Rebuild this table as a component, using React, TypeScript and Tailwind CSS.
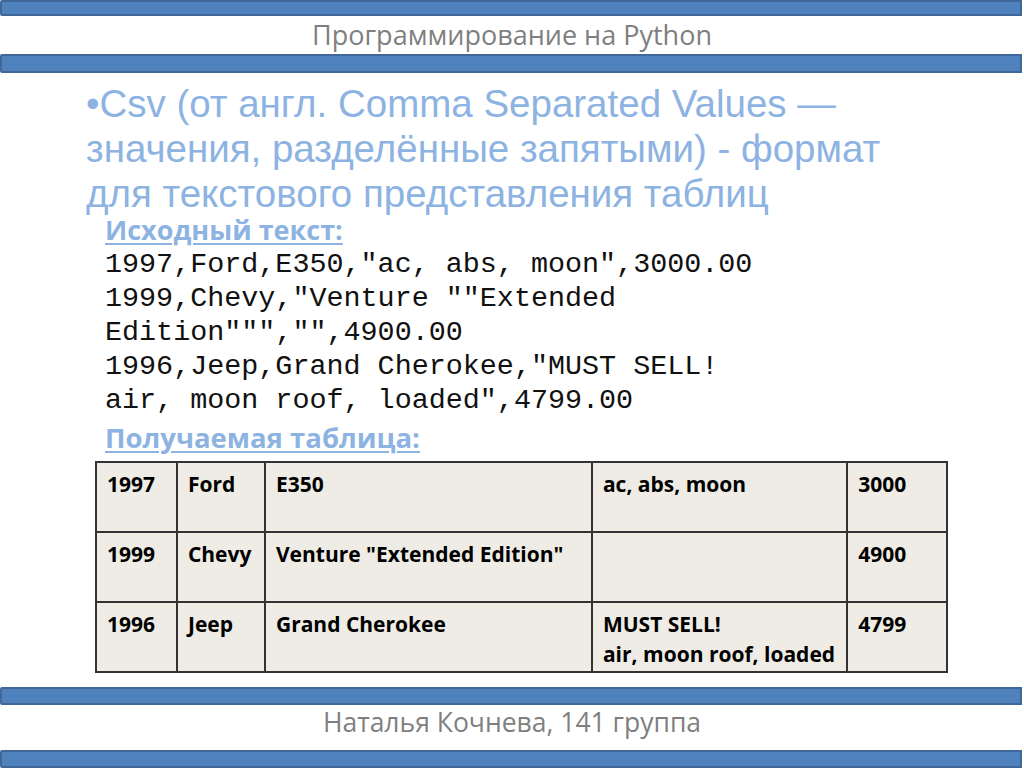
const rows = [
  { year: "1997", make: "Ford", model: "E350", desc: ["ac, abs, moon"], price: "3000" },
  { year: "1999", make: "Chevy", model: 'Venture "Extended Edition"', desc: [], price: "4900" },
  { year: "1996", make: "Jeep", model: "Grand Cherokee", desc: ["MUST SELL!", "air, moon roof, loaded"], price: "4799" },
];

const source = [
  '1997,Ford,E350,"ac, abs, moon",3000.00',
  '1999,Chevy,"Venture ""Extended',
  'Edition""","",4900.00',
  '1996,Jeep,Grand Cherokee,"MUST SELL!',
  'air, moon roof, loaded",4799.00',
];

function Bar({ h }: { h: string }) {
  return (
    <div className={`${h} mr-[2px] rounded-l-[2px] border-2 border-[#3f6797] bg-[#4f81bd]`} />
  );
}

export default function App() {
  return (
    <div className="flex h-[768px] w-[1024px] flex-col bg-white font-['Open_Sans',sans-serif]">
      <Bar h="h-[16px]" />
      <div className="flex h-[38px] items-center justify-center text-[27px] text-[#7f7f7f]">
        Программирование на Python
      </div>
      <Bar h="h-[19px]" />

      {/* Content */}
      <div className="flex flex-1 flex-col pl-[86px] pt-[8px]">
        <p className="whitespace-nowrap font-['Liberation_Sans',Arial,sans-serif] text-[38.5px] leading-[45px] text-[#8db3e2]">
          •Csv (от англ. Comma Separated Values —<br />
          значения, разделённые запятыми) - формат<br />
          для текстового представления таблиц
        </p>

        <div className="pl-[19px]">
          <h3 className="text-[27px] font-bold leading-[28px] text-[#8db3e2] underline decoration-[2px] underline-offset-[3px]">
            Исходный текст:
          </h3>
          <div className="mt-[4px] font-['Liberation_Mono',monospace] text-[28.4px] leading-[34px] text-[#111]">
            {source.map((line) => (
              <div key={line} className="whitespace-pre">
                {line}
              </div>
            ))}
          </div>
          <h3 className="mt-[4px] text-[27.5px] font-bold leading-[32px] text-[#8db3e2] underline decoration-[2px] underline-offset-[3px]">
            Получаемая таблица:
          </h3>
        </div>

        <table className="mt-[7px] ml-[9px] w-[853px] border-collapse bg-[#eeece4] text-[21px] font-bold leading-[30px] text-black">
          <colgroup>
            <col className="w-[81px]" />
            <col className="w-[88px]" />
            <col className="w-[328px]" />
            <col className="w-[256px]" />
            <col className="w-[100px]" />
          </colgroup>
          <tbody>
            {rows.map((r) => (
              <tr key={r.year} className="h-[70px]">
                <td className="border-2 border-[#333] px-[10px] pt-[6px] align-top">{r.year}</td>
                <td className="border-2 border-[#333] px-[10px] pt-[6px] align-top">{r.make}</td>
                <td className="border-2 border-[#333] px-[10px] pt-[6px] align-top">{r.model}</td>
                <td className="border-2 border-[#333] px-[10px] pt-[6px] align-top">
                  {r.desc.map((d) => (
                    <div key={d}>{d}</div>
                  ))}
                </td>
                <td className="border-2 border-[#333] px-[10px] pt-[6px] align-top">{r.price}</td>
              </tr>
            ))}
          </tbody>
        </table>
      </div>

      <Bar h="h-[18px]" />
      <div className="flex h-[45px] justify-center pt-[1px] text-[26.5px] leading-[32px] text-[#7f7f7f]">
        Наталья Кочнева, 141 группа
      </div>
      <Bar h="h-[18px]" />
    </div>
  );
}
